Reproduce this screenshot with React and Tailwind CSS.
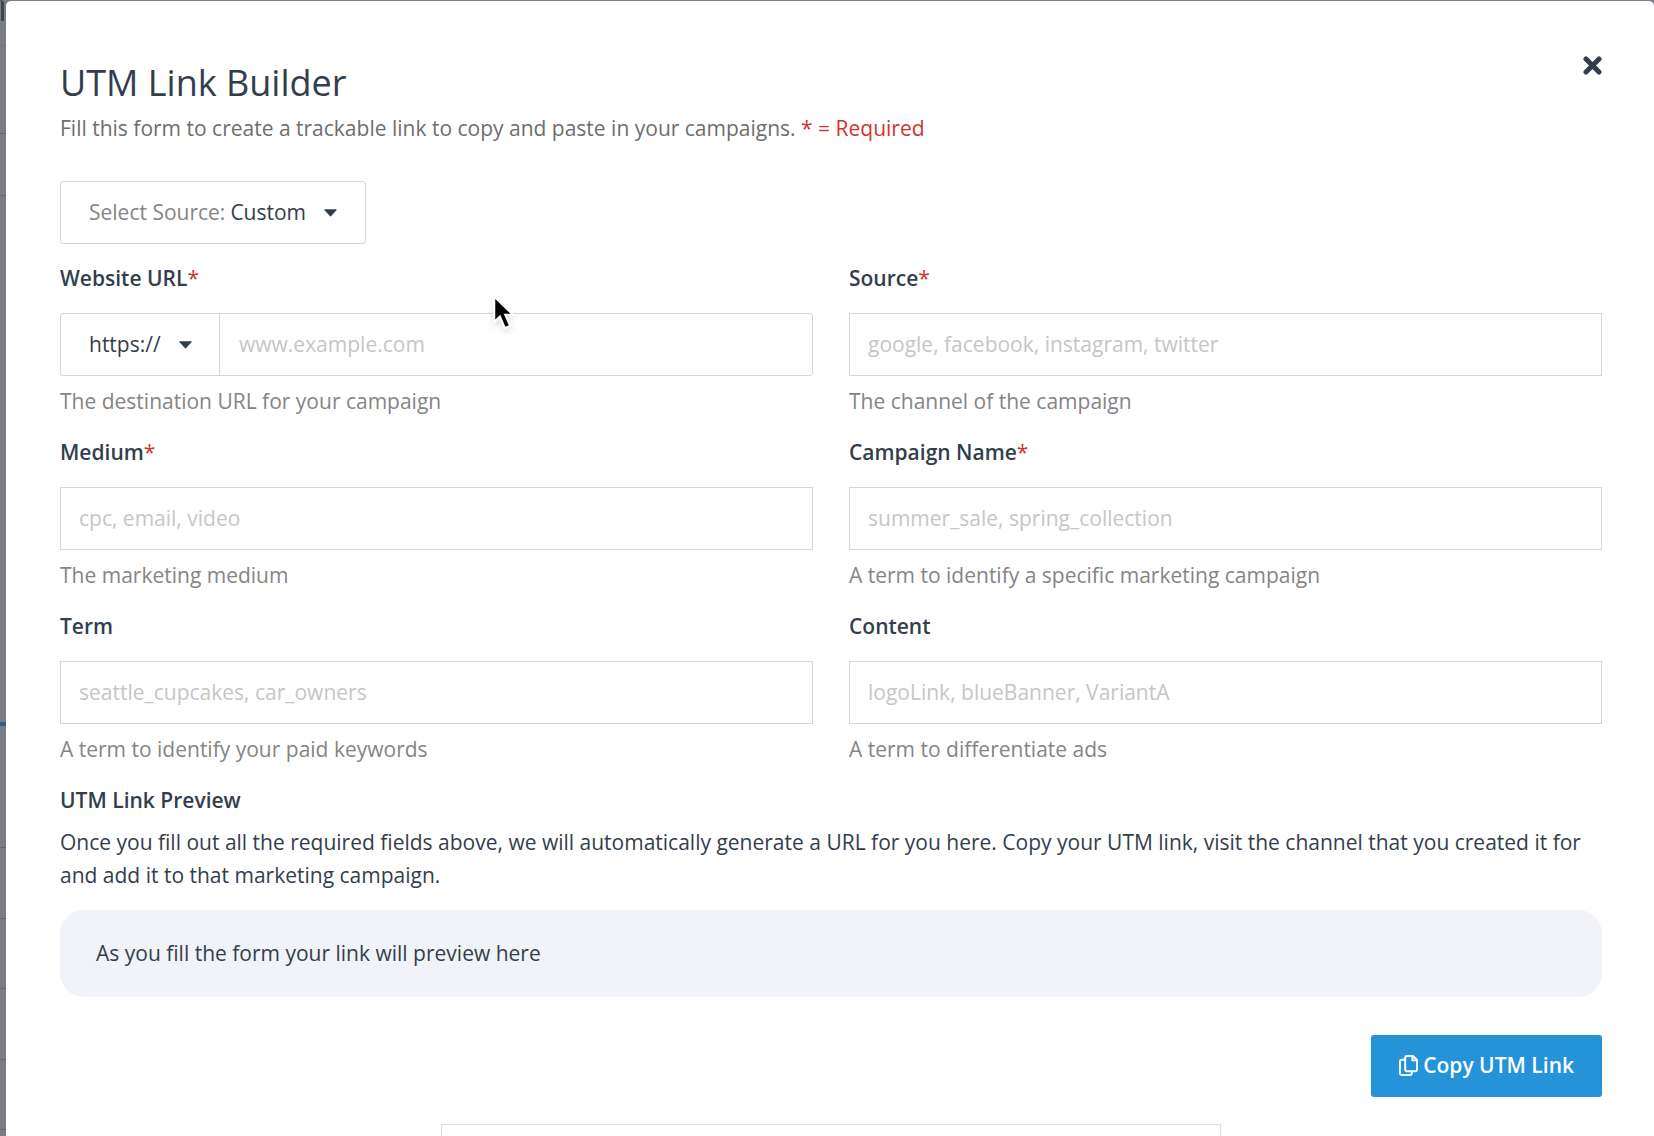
import { useState } from "react";

const backdropRows = [
  "h-[46px] border-b border-[#72747e]",
  "h-[88px] border-b border-[#666872]",
  "h-[62px] border-b border-[#666872]",
  "h-[530px] border-b-4 border-[#2f5f86]",
  "h-[122px] border-b border-[#666872]",
  "h-[71px] border-b border-[#666872]",
  "h-[70px] border-b border-[#666872]",
  "h-[71px] border-b border-[#666872]",
  "h-[70px] border-b border-[#666872]",
];

const fields = [
  { id: "source", label: "Source", required: true, placeholder: "google, facebook, instagram, twitter", help: "The channel of the campaign" },
  { id: "medium", label: "Medium", required: true, placeholder: "cpc, email, video", help: "The marketing medium" },
  { id: "campaign", label: "Campaign Name", required: true, placeholder: "summer_sale, spring_collection", help: "A term to identify a specific marketing campaign" },
  { id: "term", label: "Term", placeholder: "seattle_cupcakes, car_owners", help: "A term to identify your paid keywords" },
  { id: "content", label: "Content", placeholder: "logoLink, blueBanner, VariantA", help: "A term to differentiate ads" },
];

function Caret() {
  return (
    <svg className="pointer-events-none h-2 w-[13px] shrink-0" viewBox="0 0 13 8" fill="#333e4d" aria-hidden="true">
      <path d="M1 .3h11q1 .1.4.9L7.2 7.1q-.7.7-1.4 0L.6 1.2Q0 .4 1 .3Z" />
    </svg>
  );
}

function CopyIcon() {
  return (
    <svg className="h-[21px] w-[19px] shrink-0" viewBox="0 0 19 21" fill="none" stroke="currentColor" strokeWidth="1.9" strokeLinejoin="round" aria-hidden="true">
      <path d="M7.6 1H14L18 5v9.800a1.400 1.400 0 0 1-1.400 1.400h-9a1.400 1.400 0 0 1-1.400-1.400V2.400A1.400 1.400 0 0 1 7.600 1Z" />
      <path d="M13.400 1.200v4.200H18" />
      <path d="M6.200 4.800H2.400A1.400 1.400 0 0 0 1 6.200v12.400A1.400 1.400 0 0 0 2.400 20h9a1.400 1.400 0 0 0 1.400-1.400v-2.200" />
    </svg>
  );
}

function Pointer() {
  return (
    <svg className="pointer-events-none absolute top-8 left-[432px] h-[44px] w-[26px] drop-shadow-md" viewBox="0 0 24 40" aria-hidden="true">
      <path d="M2 2v23.500l5.300-4.900 4.500 10.600 5-2.100-4.500-10.200h7.200Z" fill="#000" stroke="#fff" strokeWidth="2" />
    </svg>
  );
}

function Label({ htmlFor, children, required }) {
  return (
    <label htmlFor={htmlFor} className="block font-semibold">
      {children}
      {required && <span className="font-normal text-[#d0342c]">*</span>}
    </label>
  );
}

function Field({ id, label, required, placeholder, help }) {
  return (
    <div>
      <Label htmlFor={id} required={required}>{label}</Label>
      <input
        id={id}
        type="text"
        placeholder={placeholder}
        className="mt-[18px] block h-[63px] w-full border border-[#d5d6d8] px-[18px] pb-0.5 outline-none placeholder:text-[#c6c6c6]"
      />
      <p className="mt-[9px] text-[#858585]">{help}</p>
    </div>
  );
}

export default function App() {
  const [source, setSource] = useState("Custom");
  const [scheme, setScheme] = useState("https://");
  return (
    <div className="flex h-screen overflow-hidden bg-[#7b7d86] font-['Open_Sans',sans-serif] text-[21px] leading-[33px] text-[#333e4d]">
      <div className="relative w-[6px] shrink-0 overflow-hidden" aria-hidden="true">
        {backdropRows.map((row, i) => (
          <div key={i} className={row} />
        ))}
        <div className="absolute top-0 left-0 h-[21px] w-1 rounded-tr-sm border-r-3 border-[#3e4654]" />
      </div>
      <main role="dialog" aria-labelledby="title" className="mt-px min-w-0 flex-1 overflow-hidden rounded-t-[5px] bg-white pt-[55px] pr-[52px] pl-[54px]">
        <header className="flex items-start justify-between">
          <div>
            <h1 id="title" className="text-4xl leading-[54px]">UTM Link Builder</h1>
            <p className="mt-[2px] text-[#6e6e6e]">
              Fill this form to create a trackable link to copy and paste in your campaigns.{" "}
              <span className="text-[#cf3530]">* = Required</span>
            </p>
          </div>
          <button type="button" aria-label="Close">
            <svg className="size-[19px]" viewBox="0 0 19 19" stroke="#333e4d" strokeWidth="5" strokeLinecap="round" aria-hidden="true">
              <path d="M3 3l13 13M16 3L3 16" />
            </svg>
          </button>
        </header>

        <label className="mt-9 flex h-[63px] w-fit items-center rounded-[3px] border border-[#d5d6d8] pr-7 pl-7">
          <span className="mr-[5px] text-[#858585]">Select Source:</span>
          <select value={source} onChange={(e) => setSource(e.target.value)} className="mr-[18px] appearance-none outline-none">
            <option>Custom</option>
          </select>
          <Caret />
        </label>

        <form className="mt-[18px] grid grid-cols-2 gap-x-9 gap-y-[18px]">
          <div className="relative">
            <Label htmlFor="url" required>Website URL</Label>
            <div className="mt-[18px] flex h-[63px] rounded-[3px] border border-[#d5d6d8]">
              <div className="flex items-center border-r border-[#d5d6d8] pr-[27px] pl-7">
                <select aria-label="Protocol" value={scheme} onChange={(e) => setScheme(e.target.value)} className="mr-[18px] appearance-none outline-none">
                  <option>https://</option>
                </select>
                <Caret />
              </div>
              <input id="url" type="text" placeholder="www.example.com" className="min-w-0 flex-1 px-[19px] outline-none placeholder:text-[#c6c6c6]" />
            </div>
            <p className="mt-[9px] text-[#858585]">The destination URL for your campaign</p>
            <Pointer />
          </div>
          {fields.map((f) => (
            <Field key={f.id} {...f} />
          ))}
        </form>

        <h2 className="mt-[18px] font-semibold">UTM Link Preview</h2>
        <p className="mt-[9px]">
          Once you fill out all the required fields above, we will automatically generate a URL for you here. Copy your UTM link, visit the channel that you created it for and add it to that marketing campaign.
        </p>
        <output className="mt-[18px] block rounded-3xl bg-[#f1f3f8] px-9 py-[27px]">As you fill the form your link will preview here</output>

        <div className="mt-[38px] flex justify-end">
          <button type="button" className="flex h-[62px] items-center gap-[5px] rounded-[3px] bg-[#2493d9] px-7 pb-px font-semibold text-white">
            <CopyIcon />
            Copy UTM Link
          </button>
        </div>
        <div className="mx-auto mt-[27px] h-[63px] w-[780px] max-w-full border border-[#dddddd]" />
      </main>
    </div>
  );
}
